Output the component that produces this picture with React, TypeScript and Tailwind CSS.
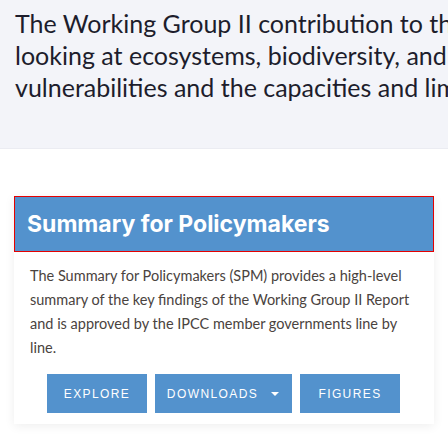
export default function App() {
  return (
    <div className="min-h-screen w-full overflow-hidden bg-white font-['Inter',sans-serif]">
      {/* intro strip */}
      <section className="h-[149px] overflow-hidden border-b border-[#ebecf2] bg-[#f3f4f9] pl-[15px] pt-[7px]">
        <p className="whitespace-nowrap font-['Lato',sans-serif] text-[25px] leading-[32px] text-[#1d1d2c]">
          The Working Group II contribution to the Sixth Assessment Report assesses the impacts of climate change,
          <br />
          looking at ecosystems, biodiversity, and human communities at global and regional levels. It also reviews
          <br />
          vulnerabilities and the capacities and limits of the natural world and human societies to adapt to climate change.
        </p>
      </section>

      <div className="px-[14px] pt-[47px]">
        <div className="bg-white shadow-[0_2px_10px_rgba(0,0,0,0.07)]">
          <h2 className="border border-[#e50000] bg-[#5392cd] px-[12px] py-[13px] text-[23px] font-bold leading-[28px] text-white">
            Summary for Policymakers
          </h2>
          <div className="pb-[11px] pl-[16px] pr-[18px] pt-[12px]">
            <p className="font-['Lato',sans-serif] text-[14.5px] leading-[24px] text-[#4a4340]">
              The Summary for Policymakers (SPM) provides a high-level summary of the key findings of the Working Group II Report and is approved by the IPCC member governments line by line.
            </p>
            <div className="mt-[14px] flex justify-center gap-[8px] font-['Liberation_Sans',sans-serif]">
              <button className="h-[39px] w-[100px] bg-[#5392cd] pl-[1px] text-[12px] font-medium uppercase tracking-[1.4px] text-white">
                Explore
              </button>
              <button className="flex h-[39px] w-[137px] items-center justify-center gap-[13px] bg-[#5392cd] text-[12px] font-medium uppercase tracking-[1.4px] text-white">
                Downloads
                <svg width="8" height="4" viewBox="0 0 8 4" className="fill-white">
                  <path d="M0 0h8L4 4z" />
                </svg>
              </button>
              <button className="h-[39px] w-[100px] bg-[#5392cd] pl-[1px] text-[12px] font-medium uppercase tracking-[1.4px] text-white">
                Figures
              </button>
            </div>
          </div>
        </div>
      </div>
    </div>
  );
}
